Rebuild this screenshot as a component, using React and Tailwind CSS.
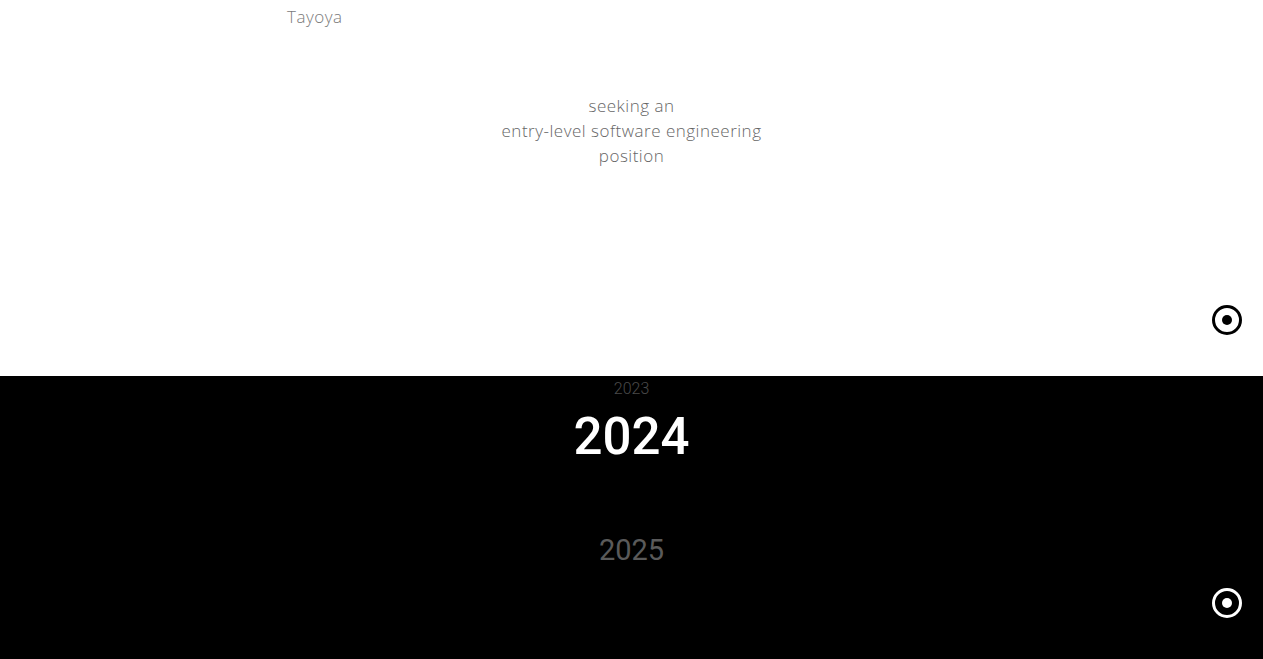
import React from 'react';

const Target = ({ dark }) => (
  <div
    className={`flex h-[30px] w-[30px] items-center justify-center rounded-full border-[3px] ${
      dark ? 'border-white' : 'border-black'
    }`}
  >
    <div className={`h-[10px] w-[10px] rounded-full ${dark ? 'bg-white' : 'bg-black'}`} />
  </div>
);

const App = () => {
  return (
    <div className="font-['Open_Sans',sans-serif]">
      <section className="flex h-[376px] flex-col bg-white">
        <div className="pl-[287px] pt-[6px] text-[17px] leading-[22px] font-light tracking-[0.5px] text-[#7a7a7a]">Tayoya</div>
        <div className="mt-[65px] text-center text-[17px] leading-[25px] font-light tracking-[0.5px] text-[#666]">
          <p>seeking an</p>
          <p>entry-level software engineering</p>
          <p>position</p>
        </div>
        <div className="mt-auto mb-[41px] flex justify-end pr-[21px]">
          <Target />
        </div>
      </section>
      <section className="flex h-[283px] flex-col bg-black font-['Roboto',sans-serif]">
        <div className="pt-[3px] text-center text-[16px] leading-[20px] font-light text-[#4a4a4a]">2023</div>
        <div className="mt-[8px] text-center text-[51px] leading-[60px] font-medium text-white">2024</div>
        <div className="mt-[66px] text-center text-[29px] leading-[34px] font-normal text-[#5a5a5a]">2025</div>
        <div className="mt-auto mb-[41px] flex justify-end pr-[21px]">
          <Target dark />
        </div>
      </section>
    </div>
  );
};

export default App;
